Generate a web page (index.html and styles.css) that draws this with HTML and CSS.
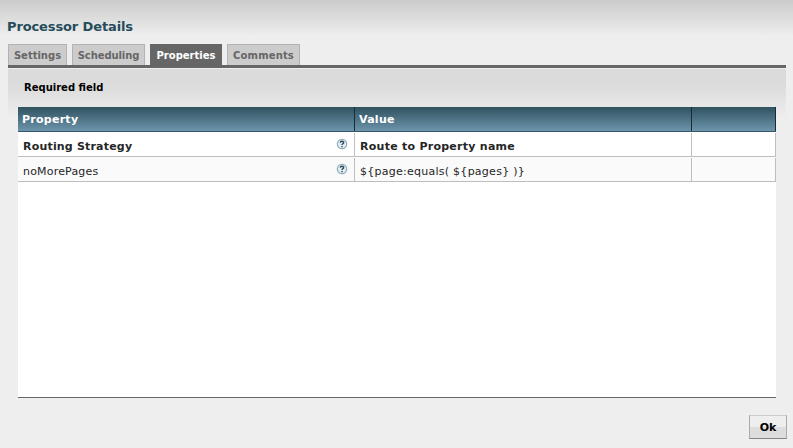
FILE: index.html
```html
<!DOCTYPE html>
<html lang="en">
<head>
<meta charset="utf-8">
<title>Processor Details</title>
<link rel="stylesheet" href="styles.css">
</head>
<body>
<main class="dialog">
  <h1 class="title">Processor Details</h1>
  <nav class="tabs">
    <div class="tab tab-settings">Settings</div>
    <div class="tab tab-scheduling">Scheduling</div>
    <div class="tab tab-properties active">Properties</div>
    <div class="tab tab-comments">Comments</div>
  </nav>
  <section class="panel">
    <div class="required">Required field</div>
    <div class="table">
      <div class="row head">
        <div class="cell">Property</div><div class="cell">Value</div><div class="cell"></div>
      </div>
      <div class="row strong">
        <div class="cell"><span class="name">Routing Strategy</span>
          <svg class="help" viewBox="0 0 12 12"><circle cx="6" cy="6" r="4.7"/><path d="M4.3 4.7C4.3 2.8 7.7 2.8 7.7 4.6C7.7 5.8 6 5.8 6 7M6 8.1V9.3"/></svg>
        </div>
        <div class="cell"><span>Route to Property name</span></div><div class="cell"></div>
      </div>
      <div class="row alt">
        <div class="cell"><span class="name">noMorePages</span>
          <svg class="help" viewBox="0 0 12 12"><circle cx="6" cy="6" r="4.7"/><path d="M4.3 4.7C4.3 2.8 7.7 2.8 7.7 4.6C7.7 5.8 6 5.8 6 7M6 8.1V9.3"/></svg>
        </div>
        <div class="cell"><span>${page:equals( ${pages} )}</span></div><div class="cell"></div>
      </div>
    </div>
  </section>
  <footer class="footer"><button class="ok">Ok</button></footer>
</main>
</body>
</html>
```
FILE: styles.css
```css
* { box-sizing: border-box; }
body {
  margin: 0;
  font-family: Verdana, "DejaVu Sans", sans-serif;
  color: #262626;
}
.dialog {
  width: 793px;
  height: 448px;
  overflow: hidden;
  padding: 0 7px 0 8px;
  background: linear-gradient(#cbcbcb, #eee 36px) #eee;
}
.title {
  margin: 0 0 0 -1px;
  height: 44px;
  padding-top: 18px;
  font-size: 13px;
  line-height: 18px;
  letter-spacing: -0.12px;
  color: #264c5a;
}
.tabs {
  display: flex;
  gap: 5px;
  height: 24px;
  border-bottom: 3px solid #666;
}
.tab {
  height: 21px;
  border: 1px solid #b3b3b3;
  border-bottom: 0;
  background: #ccc;
  color: #666;
  font-size: 10px;
  font-weight: bold;
  line-height: 21px;
  text-align: center;
  white-space: nowrap;
}
.tab-settings { width: 59px; }
.tab-scheduling, .tab-comments { width: 73px; }
.tab-scheduling { letter-spacing: -0.1px; }
.tab-comments { letter-spacing: 0.15px; }
.tab-properties { width: 72px; }
.tab.active { background: #666; border-color: #666; color: #fff; }
.panel {
  height: 330px;
  margin-top: 1px;
  padding: 0 10px;
  background: linear-gradient(#dbdbdb, #dcdcdc 17px, #eee 49px);
}
.required {
  height: 38px;
  padding-left: 6px;
  font-size: 10px;
  font-weight: bold;
  line-height: 37px;
  color: #000;
}
.table {
  height: 291px;
  background: #fff;
  border-bottom: 1px solid #666;
}
.row {
  display: grid;
  grid-template-columns: 337px 337px 84px;
  grid-template-rows: 23px;
  height: 25px;
  padding-top: 1px;
  border-bottom: 1px solid #bebebe;
  font-size: 11px;
  letter-spacing: 0.26px;
}
.head {
  grid-template-rows: 24px;
  padding: 0;
  border-bottom-color: #365868;
  background: linear-gradient(#305260, #6c94ab);
  color: #fff;
  font-weight: bold;
}
.cell {
  display: flex;
  justify-content: space-between;
  padding: 0 6px 0 5px;
  border-right: 1px solid #bebebe;
  line-height: 27px;
  white-space: nowrap;
}
.head .cell { padding-left: 4px; border-right-color: #172c35; line-height: 25px; }
.name { letter-spacing: 0.19px; }
.strong { font-weight: bold; }
.alt { background: #fafafa; }
.help {
  width: 12px;
  height: 12px;
  margin-top: 5px;
  fill: #e5edf2;
  stroke: #91adbd;
  stroke-width: 1.2;
}
.help path { fill: none; stroke: #294b5a; stroke-width: 1.4; }
.footer { display: flex; justify-content: flex-end; padding-top: 16px; margin-right: -1px; }
.ok {
  width: 38px;
  height: 24px;
  padding: 1px 0 0;
  border: 1px solid;
  border-color: #ccc #aaa #858585 #aaa;
  background: linear-gradient(#eee 50%, #ddd 50%);
  color: #000;
  font: bold 11px/21px Verdana, "DejaVu Sans", sans-serif;
}
```
